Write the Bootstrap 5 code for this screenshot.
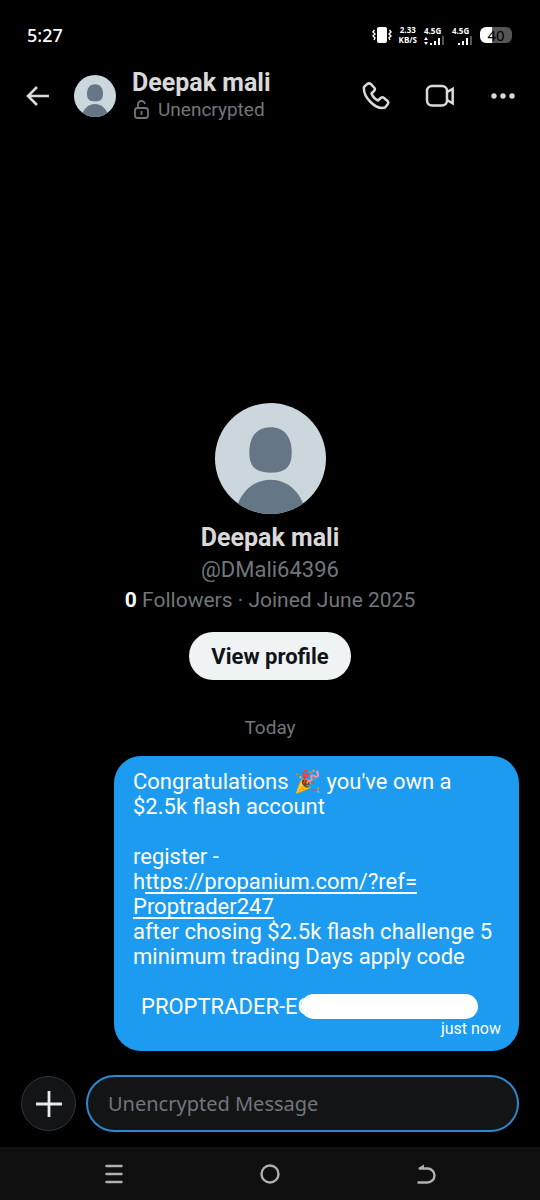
<!DOCTYPE html>
<html lang="en" data-bs-theme="dark">
<head>
<meta charset="utf-8">
<meta name="viewport" content="width=device-width, initial-scale=1">
<title>Deepak mali</title>
<link href="https://cdn.jsdelivr.net/npm/bootstrap@5.3.0/dist/css/bootstrap.min.css" rel="stylesheet">
<style>
  body { background: #000; color: #d9d9d9; font-family: Roboto, "Liberation Sans", sans-serif; }
  svg { display: block; flex: none; }
  .muted-text { color: #71767b; }
  .status-bar { height: 70px; padding: 0 28px 0 27px; font-family: "Noto Sans", sans-serif; color: #fff; }
  .clock { font-size: 18px; font-weight: 500; line-height: 24px; }
  .status-icons { gap: 7px; }
  .net-label { font: 700 8px/8px "Open Sans", sans-serif; }
  .net-label span { display: block; line-height: 10px; }
  .battery { width: 32px; height: 16px; border-radius: 6px; background: linear-gradient(90deg, #fff 38%, #555 38%); color: #000; font-size: 15px; line-height: 16px; }
  .chat-head { height: 52px; padding: 0 24px 0 26px; }
  .head-actions { gap: 35px; }
  .icon-btn { padding: 0; border: 0; background: none; color: inherit; }
  .chat-name { font-size: 25px; line-height: 28px; font-weight: 700; }
  .lock-line { font-size: 19px; line-height: 26px; }
  .profile-name { font-size: 25px; line-height: 32px; font-weight: 700; }
  .profile-line { font-size: 22px; line-height: 31px; }
  .profile-stats { font-size: 21px; line-height: 31px; }
  .view-btn { height: 48px; padding: 0 22px; font-size: 22px; font-weight: 700; background: #eff3f4; color: #0f1419; border: 0; }
  .day { font-size: 19px; line-height: 24px; margin: 36px 0 16px; }
  .bubble { width: 75%; margin-right: 21px; padding: 13px 18px 12px 19px; border-radius: 27px; background: #1d9bf0; color: #fff; font-size: 22px; line-height: 25px; }
  .bubble a { color: #fff; text-underline-offset: 3px; text-decoration-thickness: 2px; text-decoration-skip-ink: none; }
  .stamp { font-size: 16px; line-height: 20px; }
  .redaction { position: absolute; left: 168px; top: 0; width: 177px; height: 25px; border-radius: 13px; background: #fff; }
  .composer { padding: 24px 21px 15px; gap: 10px; }
  .plus-btn { width: 55px; height: 55px; background: #121416; border: 1px solid #333639; color: #e7e9ea; padding: 0; }
  .composer .form-control { height: 57px; padding: 0 20px; border: 2px solid #2f87cb; border-radius: 29px; background: #121416; font: 20px/28px "Noto Sans", sans-serif; box-shadow: none; }
  .composer .form-control::placeholder { color: #71767b; opacity: 1; }
  .sys-nav { height: 53px; background: #0f0f0f; color: #b0b0b0; padding: 0 36px; }
</style>
</head>
<body>
<div class="d-flex flex-column min-vh-100">
  <div class="status-bar d-flex align-items-center justify-content-between">
    <span class="clock">5:27</span>
    <div class="status-icons d-flex align-items-center">
      <svg width="20" height="18" viewBox="0 0 20 18"><rect x="5" y="1" width="10" height="16" rx="2" fill="#fff"/><path d="M2.500 4 1 6l2 2-2 2 2 2-1 2M17.500 4 19 6l-2 2 2 2-2 2 1 2" fill="none" stroke="#fff" stroke-width="1.400"/></svg>
      <div class="net-label text-center"><span>2.33</span><span>KB/S</span></div>
      <div class="net-label"><span>4.5G</span>
        <svg width="21" height="9" viewBox="0 0 21 9" fill="#fff"><path d="M0 4 2 1l2 3ZM0 6h4L2 9ZM6 7h2v2H6ZM10 5h2v4h-2ZM14 2h2v7h-2Z"/><path d="M18 0h2v9h-2Z" fill="#555"/></svg></div>
      <div class="net-label"><span>4.5G</span>
        <svg width="21" height="9" viewBox="0 0 21 9" fill="#fff"><path d="M6 7h2v2H6ZM10 5h2v4h-2ZM14 2h2v7h-2Z"/><path d="M18 0h2v9h-2Z" fill="#555"/></svg></div>
      <div class="battery text-center">40</div>
    </div>
  </div>

  <header class="chat-head d-flex align-items-center">
    <button class="icon-btn me-4" type="button" aria-label="Back">
      <svg width="24" height="20" viewBox="0 0 24 20" fill="none" stroke="currentColor" stroke-width="2.600"><path d="M23 10H2M11 1 2 10l9 9"/></svg>
    </button>
    <svg width="42" height="42" viewBox="0 0 110 110" aria-hidden="true"><use href="#person"/></svg>
    <div class="ms-3 flex-grow-1">
      <div class="chat-name">Deepak mali</div>
      <div class="lock-line muted-text d-flex align-items-center gap-2">
        <svg width="18" height="20" viewBox="0 0 18 20" fill="none" stroke="currentColor" stroke-width="1.800"><rect x="3" y="8" width="13" height="10" rx="2.500"/><path d="M6 8V5a3.500 3.500 0 0 1 7-1M9.500 11v4"/></svg>
        Unencrypted
      </div>
    </div>
    <div class="head-actions d-flex align-items-center">
      <button class="icon-btn" type="button" aria-label="Call">
        <svg width="28" height="28" viewBox="0 0 28 28" fill="none" stroke="currentColor" stroke-width="2.500" stroke-linejoin="round"><path d="M2 5 5 2.200Q7 .5 9 2.200L12.500 6Q13.500 7.500 12 9L9.500 11.500Q11.500 16.500 16 18.500L19 15.800Q20.500 14.800 22 16L25.500 19Q27 20.500 25.500 22.500L23 25.500Q16 27.500 8.500 20T2 5Z"/></svg>
      </button>
      <button class="icon-btn" type="button" aria-label="Video call">
        <svg width="30" height="24" viewBox="0 0 30 24" fill="none" stroke="currentColor" stroke-width="2.500"><rect x="2" y="2" width="20" height="19.500" rx="5"/><path d="m22 8 5.700-3.200v14.500L22 16"/></svg>
      </button>
      <button class="icon-btn" type="button" aria-label="More">
        <svg width="26" height="8" viewBox="0 0 26 8" fill="currentColor"><circle cx="4" cy="4" r="2.700"/><circle cx="13" cy="4" r="2.700"/><circle cx="22" cy="4" r="2.700"/></svg>
      </button>
    </div>
  </header>

  <main class="flex-grow-1 d-flex flex-column justify-content-end">
    <section class="d-flex flex-column align-items-center text-center">
      <svg class="mb-2" width="111" height="111" viewBox="0 0 110 110" aria-hidden="true">
        <defs>
          <clipPath id="disc"><circle cx="55" cy="55" r="55"/></clipPath>
          <g id="person" clip-path="url(#disc)"><path d="M0 0h110v110H0Z" fill="#ccd6dd"/><path d="M55 24C69 24 76 34 76 49 76 63 70 69 55 69S34 63 34 49C34 34 41 24 55 24Z" fill="#657786"/><path d="M20 110C23 90 37 76 55 76S87 90 90 110Z" fill="#657786"/></g>
        </defs>
        <use href="#person"/>
      </svg>
      <div class="profile-name">Deepak mali</div>
      <div class="profile-line muted-text">@DMali64396</div>
      <div class="profile-stats muted-text"><b class="text-light">0</b> Followers · Joined June 2025</div>
      <button class="view-btn btn rounded-pill mt-3" type="button">View profile</button>
      <div class="day muted-text">Today</div>
    </section>
    <article class="bubble align-self-end">
      <div>Congratulations 🎉 you've own a<br>$2.5k flash account</div>
      <br>
      <div>register -<br>h<a href="https://propanium.com/?ref=Proptrader247">ttps://propanium.com/?ref=<br>Proptrader247</a></div>
      <div>after chosing $2.5k flash challenge 5<br>minimum trading Days apply code</div>
      <br>
      <div class="position-relative ps-2">PROPTRADER-EC<span class="redaction"></span></div>
      <div class="stamp text-end">just now</div>
    </article>
  </main>

  <form class="composer d-flex align-items-center">
    <button class="plus-btn btn rounded-circle d-flex align-items-center justify-content-center flex-shrink-0" type="button" aria-label="Add attachment">
      <svg width="26" height="26" viewBox="0 0 26 26" stroke="currentColor" stroke-width="2.800"><path d="M13 0v26M0 13h26"/></svg>
    </button>
    <input class="form-control" type="text" placeholder="Unencrypted Message" aria-label="Unencrypted Message">
  </form>

  <nav class="sys-nav d-flex align-items-center justify-content-around">
    <button class="icon-btn" type="button" aria-label="Recent apps"><svg width="20" height="20" viewBox="0 0 20 20" stroke="currentColor" stroke-width="2.400" stroke-linecap="round"><path d="M2.500 2h15M2.500 10h15M2.500 18h15"/></svg></button>
    <button class="icon-btn" type="button" aria-label="Home"><svg width="20" height="20" viewBox="0 0 20 20" fill="none" stroke="currentColor" stroke-width="2.400"><circle cx="10" cy="10" r="8.500"/></svg></button>
    <button class="icon-btn" type="button" aria-label="Go back"><svg width="20" height="20" viewBox="0 0 20 20" fill="none" stroke="currentColor" stroke-width="2.400"><path d="M1.500 18.500h10a7 7 0 0 0 0-14H3"/><path d="M1.500 4.500 8 .5v4Z" fill="currentColor" stroke="none"/></svg></button>
  </nav>
</div>
<script src="https://cdn.jsdelivr.net/npm/bootstrap@5.3.0/dist/js/bootstrap.bundle.min.js"></script>
</body>
</html>
